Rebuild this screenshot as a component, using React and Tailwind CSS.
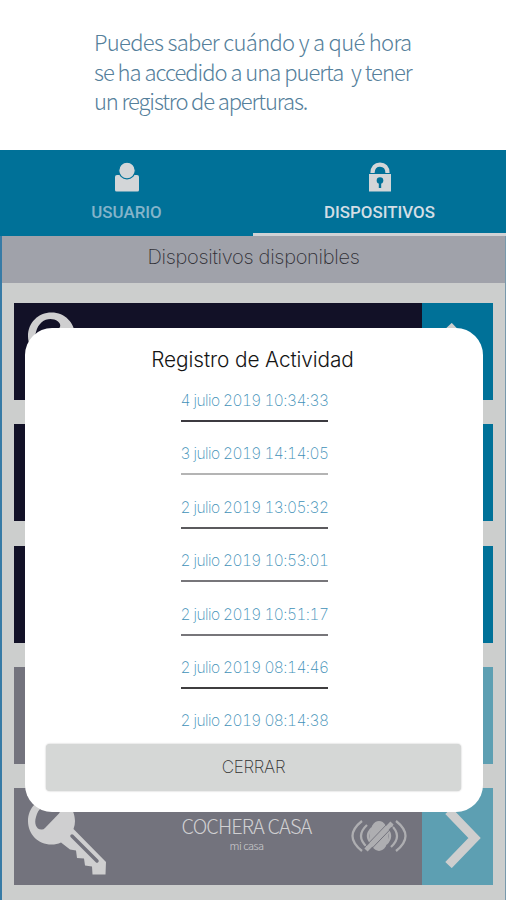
import React from 'react';

const entries = [
  { date: '4 julio 2019 10:34:33', line: 'bg-[#3c3a40]' },
  { date: '3 julio 2019 14:14:05', line: 'bg-[#b4b4b4]' },
  { date: '2 julio 2019 13:05:32', line: 'bg-[#5b5a5d]' },
  { date: '2 julio 2019 10:53:01', line: 'bg-[#77767a]' },
  { date: '2 julio 2019 10:51:17', line: 'bg-[#77767a]' },
  { date: '2 julio 2019 08:14:46', line: 'bg-[#3f3e3f]' },
  { date: '2 julio 2019 08:14:38' },
];

const devices = [
  { id: 1, active: true },
  { id: 2, active: true },
  { id: 3, active: true },
  { id: 4, active: false },
  { id: 5, active: false, name: 'COCHERA CASA', place: 'mi casa' },
];

function UserIcon() {
  return (
    <svg width="26" height="30" viewBox="0 0 26 30" fill="#d3d6d8">
      <path d="M3 13h20q2 0 2 2v13q0 1.500-1.500 1.500h-21Q1 29.500 1 28V15q0-2 2-2z" />
      <circle cx="13" cy="8.500" r="8.300" stroke="#007198" strokeWidth="1.200" />
    </svg>
  );
}

function LockIcon() {
  return (
    <svg width="24" height="30" viewBox="0 0 24 30">
      <path d="M4.500 11C4.500 5.500 7.500 2.600 12 2.600s7.500 2.900 7.500 8.400" fill="none" stroke="#d3d6d8" strokeWidth="4.200" />
      <path d="M1 12h22v17.500H1z" fill="#d3d6d8" />
      <circle cx="12" cy="18.500" r="3.300" fill="#007198" />
      <path d="M10.800 20h2.400v6h-2.400z" fill="#007198" />
    </svg>
  );
}

function KeyIcon() {
  return (
    <svg width="80" height="80" viewBox="0 0 80 80">
      <path
        fillRule="evenodd"
        fill="#cfcfd0"
        d="M23.500.5C37 .5 47 11 47 24q0 4-1.500 8L78 65l-.5 12.500H64.500L64 69.500 57 68.500 56 61.500 49 61 48 53.500 42 52.500 33 45.500C30 47 27 47.500 23.500 47.500 10 47.500 0 37 0 24S10 .5 23.500.5zM8 20C6 26 8 33 14 32.500Q15.500 32.500 17 31L31 16.500Q34 13 30 9.500C22 4 11 8 8 20z"
      />
      <path d="m44 39 25 25" stroke="#73737d" strokeWidth="3.500" strokeLinecap="round" />
    </svg>
  );
}

function SignalOffIcon() {
  return (
    <svg width="56" height="32" viewBox="0 0 56 32" fill="none" stroke="#aeaeb1" strokeWidth="2.300">
      <path d="M11 1q-19 15 0 30M16 5q-12 11 0 22M21 8q-8 8 0 16M45 1q19 15 0 30M40 5q12 11 0 22M35 8q8 8 0 16" />
      <ellipse cx="28" cy="16" rx="9.500" ry="15" fill="#aeaeb1" stroke="none" />
      <path d="M13 28 39 1M17.500 32 43.500 5" stroke="#73737d" strokeWidth="1" />
      <path d="M15 30 41 3" strokeWidth="4.500" />
    </svg>
  );
}

function Tab({ icon, label, selected }) {
  return (
    <div
      className={`flex w-[253px] flex-col items-center border-b-[3px] pt-[12px] ${
        selected ? 'border-[#d0d2d5] text-[#d3dee5]' : 'border-[#007198] text-[#84b4ca]'
      }`}
    >
      {icon}
      <span className="mt-[10px] font-[Roboto,sans-serif] text-[16.900px] leading-5 font-medium">{label}</span>
    </div>
  );
}

function DeviceCard({ device }) {
  return (
    <div className="flex h-[97px] shrink-0">
      <div className={`flex flex-1 ${device.active ? 'bg-[#121127]' : 'bg-[#73737d]'}`}>
        <div className="pt-[9px] pl-[14px]">
          <KeyIcon />
        </div>
        {device.name && (
          <div className="flex flex-1 items-start pt-[25px] text-[#d0d0d2]">
            <div className="ml-[61px] flex w-[155px] flex-col items-center font-['Noto_Sans_CJK_SC',sans-serif] font-light whitespace-nowrap">
              <span className="text-[20px] leading-[26px] tracking-[-0.9px]">{device.name}</span>
              <span className="text-[11px] leading-3 tracking-[-0.5px]">{device.place}</span>
            </div>
            <div className="mt-[7px] ml-[27px]">
              <SignalOffIcon />
            </div>
          </div>
        )}
      </div>
      <div className={`w-[71px] pt-[20px] pl-[23px] ${device.active ? 'bg-[#007198]' : 'bg-[#5d9fb2]'}`}>
        <svg width="37" height="60" viewBox="0 0 37 60" fill="none" stroke="#cecece" strokeWidth="9">
          <path d="M3.500 3 29.500 30 3.500 57" />
        </svg>
      </div>
    </div>
  );
}

function ActivityDialog() {
  return (
    <div className="absolute top-[178px] left-[25px] flex h-[484px] w-[458px] flex-col items-center rounded-[27px] bg-white font-[Inter,sans-serif]">
      <h2 className="mt-[18px] mr-[3px] text-[20.800px] leading-7 font-light tracking-[-0.1px] whitespace-nowrap text-[#151515]">
        Registro de Actividad
      </h2>
      <ul className="mt-[17px] h-[350px] w-[147px]">
        {entries.map((e) => (
          <li key={e.date} className="flex h-[53.400px] flex-col">
            <span className="h-[29px] text-[15.500px] leading-5 font-extralight tracking-[-0.560px] whitespace-nowrap text-[#3f91b8] tabular-nums">
              {e.date}
            </span>
            {e.line && <span className={`h-[2px] w-full shrink-0 ${e.line}`} />}
          </li>
        ))}
      </ul>
      <button className="mt-auto mr-[1px] mb-[21px] h-[47px] w-[415px] shrink-0 rounded-[4px] bg-[#d5d7d6] text-[17px] font-extralight tracking-[-0.3px] text-[#333] shadow-[0_0_2px_#bbb]">
        CERRAR
      </button>
    </div>
  );
}

export default function App() {
  return (
    <div className="flex h-[900px] w-[506px] flex-col overflow-hidden bg-white">
      <div className="h-[150px] shrink-0 pt-[27px] pl-[94px] font-['Noto_Sans_CJK_SC',sans-serif] text-[22px] leading-[29.500px] font-light whitespace-pre text-[#55809b]">
        <p className="tracking-[-0.680px]">Puedes saber cuándo y a qué hora</p>
        <p className="tracking-[-1.010px]">se ha accedido a una puerta  y tener</p>
        <p className="tracking-[-1.120px]">un registro de aperturas.</p>
      </div>

      <div className="relative flex h-[750px] flex-col bg-[#cccecd]">
        <div className="flex h-[86px] shrink-0 bg-[#007198]">
          <Tab icon={<UserIcon />} label="USUARIO" />
          <Tab icon={<LockIcon />} label="DISPOSITIVOS" selected />
        </div>

        <div className="flex flex-1 flex-col border-r border-l-2 border-r-[#7899ac] border-l-[#377ba6]">
          <div className="h-[47px] shrink-0 bg-[#a0a2aa] text-center font-[Inter,sans-serif] text-[20px] leading-[43px] font-extralight tracking-[-0.3px] text-[#303036]">
            Dispositivos disponibles
          </div>
          <div className="flex flex-col gap-[24.300px] pt-[20px] pr-[12px] pl-[12px]">
            {devices.map((d) => (
              <DeviceCard key={d.id} device={d} />
            ))}
          </div>
        </div>

        <ActivityDialog />
      </div>
    </div>
  );
}
